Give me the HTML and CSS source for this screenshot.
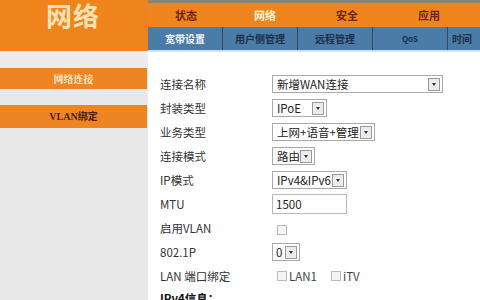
FILE: index.html
```html
<!DOCTYPE html>
<html lang="zh">
<head>
<meta charset="utf-8">
<link rel="stylesheet" href="styles.css">
</head>
<body>
<div class="page">
  <aside class="side">
    <div class="brand">网络</div>
    <div class="side-gap"></div>
    <div class="side-btn active">网络连接</div>
    <div class="side-btn vlan">VLAN绑定</div>
  </aside>
  <main class="main">
    <div class="topline"></div>
    <nav class="nav">
      <span>状态</span><span class="cur">网络</span><span>安全</span><span>应用</span>
    </nav>
    <nav class="subnav">
      <span class="cur">宽带设置</span><span>用户侧管理</span><span>远程管理</span><span class="qos">QoS</span><span class="cut">时间</span>
    </nav>
    <div class="form">
      <div class="lbl">连接名称</div>
      <div><span class="sel w171">新增WAN连接<i class="arr"></i></span></div>
      <div class="lbl">封装类型</div>
      <div><span class="sel w55">IPoE<i class="arr"></i></span></div>
      <div class="lbl">业务类型</div>
      <div><span class="sel w103">上网+语音+管理<i class="arr"></i></span></div>
      <div class="lbl">连接模式</div>
      <div><span class="sel w43">路由<i class="arr"></i></span></div>
      <div class="lbl">IP模式</div>
      <div><span class="sel w75">IPv4&amp;IPv6<i class="arr"></i></span></div>
      <div class="lbl">MTU</div>
      <div><span class="inp">1500</span></div>
      <div class="lbl">启用VLAN</div>
      <div><span class="chk"></span></div>
      <div class="lbl">802.1P</div>
      <div><span class="sel w28">0<i class="arr"></i></span></div>
      <div class="lbl">LAN 端口绑定</div>
      <div class="chks"><span class="chk"></span>LAN1<span class="chk second"></span>iTV</div>
      <div class="lbl sect">IPv4信息：</div>
      <div></div>
    </div>
  </main>
</div>
</body>
</html>
```
FILE: styles.css
```css
html, body {
  margin: 0;
  padding: 0;
  background: #ffffff;
  overflow: hidden;
}
body {
  width: 480px;
  height: 300px;
  font-family: "Noto Sans CJK SC", "Noto Sans", sans-serif;
}
.page {
  display: grid;
  grid-template-columns: 148px 1fr;
  height: 300px;
}
.side {
  background: #e8e8e8;
  display: flex;
  flex-direction: column;
}
.brand {
  height: 51px;
  background: #f0841c;
  color: #f7e2b6;
  font-size: 26px;
  font-weight: 700;
  line-height: 30px;
  text-align: center;
  letter-spacing: 1px;
  padding-right: 2px;
  box-sizing: border-box;
}
.side-gap {
  height: 17px;
  background: #ececec;
}
.side-btn {
  height: 21px;
  background: #ef8520;
  font-family: "Noto Serif CJK SC", "Noto Sans CJK SC", serif;
  font-size: 10px;
  font-weight: 700;
  line-height: 21px;
  text-align: center;
  margin-right: 1px;
}
.side-btn.active {
  color: #fff3df;
}
.side-btn.vlan {
  margin-top: 16px;
  height: 23px;
  line-height: 23px;
  color: #4a1a0a;
  font-family: "Liberation Serif", "Noto Sans CJK SC", serif;
}
.main {
  display: flex;
  flex-direction: column;
  min-width: 0;
}
.topline {
  height: 3px;
  background: #8a8470;
}
.nav {
  height: 24px;
  background: #f0851d;
  display: flex;
}
.nav span {
  width: 82px;
  text-align: center;
  font-size: 11px;
  font-weight: 700;
  line-height: 24px;
  color: #6e2508;
}
.nav span:first-child { width: 76px; }
.nav span.cur { color: #fff4d8; }
.subnav {
  height: 23px;
  background: #4b7ba7;
  border-bottom: 2px solid #cfe2ee;
  display: flex;
  overflow: hidden;
  white-space: nowrap;
}
.subnav span {
  width: 74px;
  flex: none;
  text-align: center;
  font-size: 10px;
  font-weight: 700;
  line-height: 23px;
  color: #1c2f4a;
  border-right: 1px solid #2d4a66;
}
.subnav span.cur { color: #f2f6fa; }
.subnav span.qos { font-size: 8px; }
.subnav span.cut { border-right: none; text-align: left; padding-left: 4px; }
.form {
  display: grid;
  grid-template-columns: 112px 1fr;
  grid-auto-rows: 24px;
  padding: 20px 0 0 12px;
  align-items: center;
  font-size: 11.5px;
  color: #333333;
}
.lbl {
  line-height: 16px;
}
.lbl.sect {
  align-self: start;
  font-weight: 700;
  color: #111;
  padding-top: 2px;
}
.sel {
  position: relative;
  display: inline-block;
  box-sizing: border-box;
  height: 18px;
  border: 1px solid #a8a8a8;
  background: #fff;
  color: #222;
  line-height: 16px;
  padding-left: 4px;
  font-size: 11.5px;
  vertical-align: middle;
}
.arr {
  position: absolute;
  right: 2px;
  top: 2px;
  width: 10px;
  height: 11px;
  border: 1px solid #9a9a9a;
  background: #ececec;
}
.arr::after {
  content: "";
  position: absolute;
  left: 3px;
  top: 4px;
  border-left: 2px solid transparent;
  border-right: 2px solid transparent;
  border-top: 3px solid #333;
}
.w171 { width: 171px; }
.w55 { width: 55px; }
.w103 { width: 103px; }
.w43 { width: 43px; }
.w75 { width: 75px; }
.w28 { width: 28px; padding-left: 3px; }
.inp {
  display: inline-block;
  box-sizing: border-box;
  width: 75px;
  height: 20px;
  border: 1px solid #b8b8b8;
  line-height: 18px;
  padding-left: 3px;
  color: #222;
  vertical-align: middle;
}
.chk {
  display: inline-block;
  width: 8px;
  height: 8px;
  border: 1px solid #b9b9b9;
  background: #f4f4f4;
  margin-left: 5px;
  margin-right: 2px;
  vertical-align: middle;
}
.chks {
  display: flex;
  align-items: center;
  color: #444;
}
.chk.second {
  margin-left: 14px;
}
```
